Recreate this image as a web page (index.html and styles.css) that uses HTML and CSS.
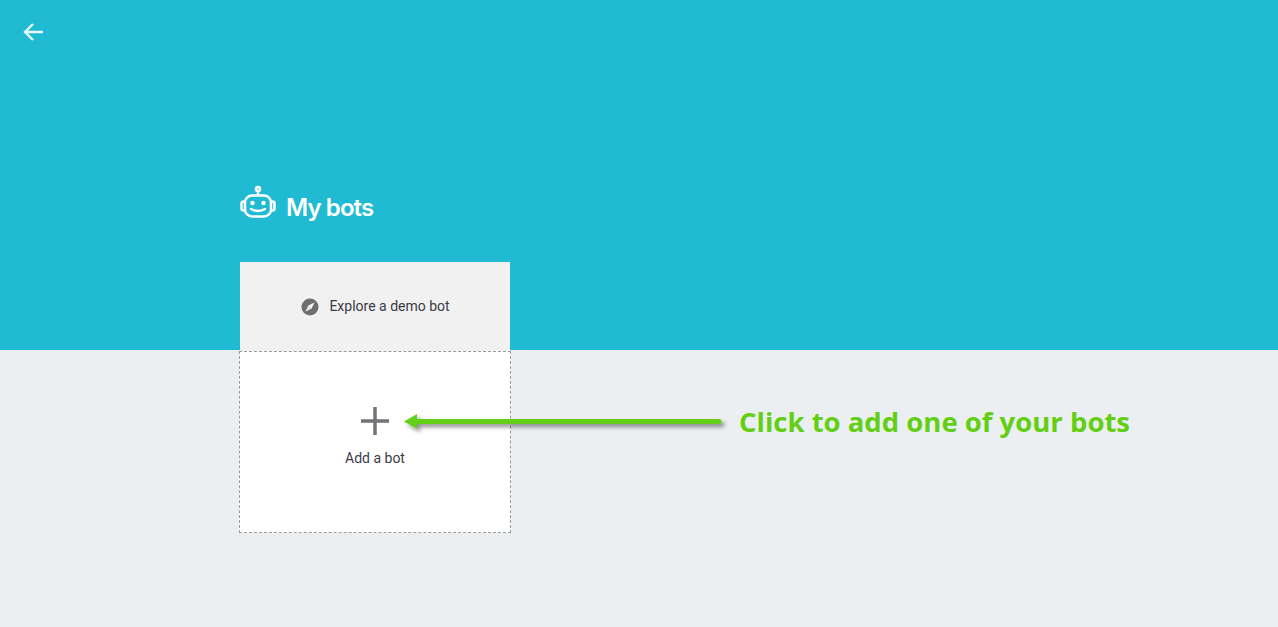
FILE: index.html
```html
<!DOCTYPE html>
<html lang="en">
<head>
<meta charset="utf-8">
<title>My bots</title>
<link rel="stylesheet" href="styles.css">
</head>
<body>
<div class="page">
  <header class="topbar">
    <svg class="back" width="24" height="24" viewBox="0 0 24 24"><path d="M22 12H5M12 4L4 12l8 8" fill="none" stroke="#e9f8fb" stroke-width="2.400"/></svg>
  </header>
  <main class="content">
    <h1 class="title">
      <svg class="bot" width="36" height="36" viewBox="0 0 36 36" fill="none" stroke="#fff" stroke-width="2.500">
        <circle cx="18" cy="4" r="2"/>
        <path d="M18 6V10.500"/>
        <rect x="5" y="10.500" width="26" height="21" rx="7"/>
        <path d="M5 16.500H3.500a2 2 0 0 0-2 2v5a2 2 0 0 0 2 2H5M31 16.500h1.500a2 2 0 0 1 2 2v5a2 2 0 0 1-2 2H31"/>
        <circle cx="12.500" cy="18" r="2.200" fill="#fff" stroke="none"/>
        <circle cx="23.500" cy="18" r="2.200" fill="#fff" stroke="none"/>
        <path d="M11 24c4 2.500 10 2.500 14 0" stroke-linecap="round"/>
      </svg>
      <span class="title-text">My bots</span>
    </h1>
    <div class="cards">
      <a class="demo">
        <svg width="18" height="18" viewBox="0 0 18 18"><circle cx="9" cy="9" r="8.500" fill="#6f6f6f"/><path d="M13.500 4.500L10.500 10.500 4.500 13.500 7.500 7.500z" fill="#fff"/><path d="M10.500 10.500L4.500 13.500 7.500 7.500z" fill="#e4e4e4"/></svg>
        <span class="demo-text">Explore a demo bot</span>
      </a>
      <a class="add">
        <svg width="30" height="30" viewBox="0 0 30 30"><path d="M15 1v28M1 15h28" stroke="#737378" stroke-width="3.500" fill="none"/></svg>
        <span>Add a bot</span>
      </a>
    </div>
  </main>
  <div class="callout">
    <svg class="arrow" width="330" height="30" viewBox="0 0 330 30">
      <defs><filter id="sh" x="-5%" y="-50%" width="110%" height="220%"><feDropShadow dx="3" dy="3" stdDeviation="2" flood-color="#000" flood-opacity=".45"/></filter></defs>
      <path d="M4 14.500L17 7V12H319a2.500 2.500 0 0 1 0 5H17V22z" fill="#63cf14" filter="url(#sh)"/>
    </svg>
    <span class="callout-text">Click to add one of your bots</span>
  </div>
</div>
</body>
</html>
```
FILE: styles.css
```css
* { box-sizing: border-box; }
html, body { margin: 0; height: 100%; }
body { font-family: Roboto, sans-serif; overflow: hidden; }
.page {
  position: relative;
  height: 627px;
  background: linear-gradient(#20bbd3 350px, #eceff2 350px);
}
.topbar { height: 185px; padding: 20px 0 0 21px; }
.back { display: block; }
.content { padding-left: 239px; }
.title {
  display: flex;
  align-items: center;
  gap: 10px;
  height: 36px;
  margin: 0 0 41px 1px;
  color: #fff;
  font-family: Inter, sans-serif;
  font-size: 24px;
  font-weight: 600;
  letter-spacing: -0.9px;
}
.title-text { margin-top: 8px; }
.bot { flex: none; }
.cards { display: flex; flex-direction: column; width: 272px; }
.demo {
  display: flex;
  align-items: center;
  justify-content: center;
  gap: 10px;
  height: 89px;
  margin: 0 1px;
  padding-left: 1px;
  background: #f1f1f2;
  color: #3b3a46;
  font-size: 14px;
}
.demo-text { margin-bottom: 2px; }
.add {
  display: flex;
  flex-direction: column;
  align-items: center;
  height: 182px;
  padding-top: 54px;
  background: #fff;
  border: 1px dashed #9a9a9a;
  color: #3b3a46;
  font-size: 14px;
}
.add span { margin-top: 14px; }
.callout {
  position: absolute;
  left: 400px;
  top: 407px;
  display: flex;
  align-items: center;
  gap: 9px;
  height: 30px;
}
.arrow { flex: none; }
.callout-text {
  margin-bottom: 2px;
  color: #63cf14;
  font-family: "Open Sans", sans-serif;
  font-size: 27.500px;
  font-weight: 700;
  white-space: nowrap;
}
```
